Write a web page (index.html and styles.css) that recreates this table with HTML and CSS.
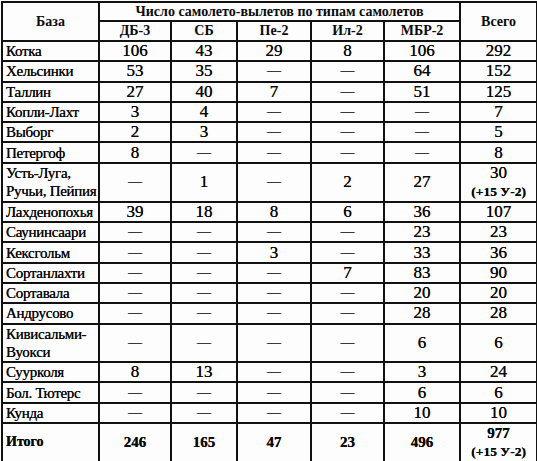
FILE: index.html
```html
<!DOCTYPE html>
<html lang="ru">
<head>
<meta charset="utf-8">
<link rel="stylesheet" href="styles.css">
</head>
<body>
<table class="sorties">
  <colgroup>
    <col class="c-base"><col class="c-db3"><col class="c-sb"><col class="c-pe2"><col class="c-il2"><col class="c-mbr"><col class="c-total">
  </colgroup>
  <thead>
    <tr class="h1">
      <th rowspan="2" class="hb">База</th>
      <th colspan="5" class="hs">Число самолето-вылетов по типам самолетов</th>
      <th rowspan="2" class="hb">Всего</th>
    </tr>
    <tr class="h2">
      <th>ДБ-3</th><th>СБ</th><th>Пе-2</th><th>Ил-2</th><th>МБР-2</th>
    </tr>
  </thead>
  <tbody>
    <tr class="r"><td class="name">Котка</td><td>106</td><td>43</td><td>29</td><td>8</td><td>106</td><td>292</td></tr>
    <tr class="r"><td class="name">Хельсинки</td><td>53</td><td>35</td><td class="d">—</td><td class="d">—</td><td>64</td><td>152</td></tr>
    <tr class="r"><td class="name">Таллин</td><td>27</td><td>40</td><td>7</td><td class="d">—</td><td>51</td><td>125</td></tr>
    <tr class="r"><td class="name">Копли-Лахт</td><td>3</td><td>4</td><td class="d">—</td><td class="d">—</td><td class="d">—</td><td>7</td></tr>
    <tr class="r"><td class="name">Выборг</td><td>2</td><td>3</td><td class="d">—</td><td class="d">—</td><td class="d">—</td><td>5</td></tr>
    <tr class="r"><td class="name">Петергоф</td><td>8</td><td class="d">—</td><td class="d">—</td><td class="d">—</td><td class="d">—</td><td>8</td></tr>
    <tr class="r2"><td class="name">Усть-Луга,<br>Ручьи, Пейпия</td><td class="d">—</td><td>1</td><td class="d">—</td><td>2</td><td>27</td><td>30<br><span class="note">(+15 У-2)</span></td></tr>
    <tr class="r"><td class="name">Лахденопохья</td><td>39</td><td>18</td><td>8</td><td>6</td><td>36</td><td>107</td></tr>
    <tr class="r"><td class="name">Саунинсаари</td><td class="d">—</td><td class="d">—</td><td class="d">—</td><td class="d">—</td><td>23</td><td>23</td></tr>
    <tr class="r"><td class="name">Кексгольм</td><td class="d">—</td><td class="d">—</td><td>3</td><td class="d">—</td><td>33</td><td>36</td></tr>
    <tr class="r"><td class="name">Сортанлахти</td><td class="d">—</td><td class="d">—</td><td class="d">—</td><td>7</td><td>83</td><td>90</td></tr>
    <tr class="r"><td class="name">Сортавала</td><td class="d">—</td><td class="d">—</td><td class="d">—</td><td class="d">—</td><td>20</td><td>20</td></tr>
    <tr class="r"><td class="name">Андрусово</td><td class="d">—</td><td class="d">—</td><td class="d">—</td><td class="d">—</td><td>28</td><td>28</td></tr>
    <tr class="r2"><td class="name">Кивисальми-<br>Вуокси</td><td class="d">—</td><td class="d">—</td><td class="d">—</td><td class="d">—</td><td>6</td><td>6</td></tr>
    <tr class="r"><td class="name">Суурколя</td><td>8</td><td>13</td><td class="d">—</td><td class="d">—</td><td>3</td><td>24</td></tr>
    <tr class="r"><td class="name">Бол. Тютерс</td><td class="d">—</td><td class="d">—</td><td class="d">—</td><td class="d">—</td><td>6</td><td>6</td></tr>
    <tr class="r"><td class="name">Кунда</td><td class="d">—</td><td class="d">—</td><td class="d">—</td><td class="d">—</td><td>10</td><td>10</td></tr>
    <tr class="r2 sum"><td class="name">Итого</td><td>246</td><td>165</td><td>47</td><td>23</td><td>496</td><td>977<br><span class="note">(+15 У-2)</span></td></tr>
  </tbody>
</table>
</body>
</html>
```

FILE: styles.css
```css
html, body {
  margin: 0;
  padding: 0;
  background: #fdfdfd;
}
body {
  padding: 1px 0 0 1px;
  font-family: "Liberation Serif", "Times New Roman", serif;
  color: #0a0a0a;
}
.sorties {
  border-collapse: collapse;
  table-layout: fixed;
  width: 535px;
  border: 2px solid #111;
}
.sorties th,
.sorties td {
  border: 2px solid #111;
  padding: 0;
  text-align: center;
  vertical-align: middle;
  overflow: hidden;
  white-space: nowrap;
}
.c-base { width: 97px; }
.c-db3 { width: 72px; }
.c-sb { width: 66px; }
.c-pe2 { width: 74px; }
.c-il2 { width: 73px; }
.c-mbr { width: 76px; }
.c-total { width: 77px; }

.sorties th {
  font-weight: bold;
  font-size: 14px;
  line-height: 16px;
}
.h1 { height: 19px; }
.h2 { height: 20px; }
.sorties td {
  font-size: 17px;
  line-height: 18px;
  text-shadow: 0 0 0.4px #000;
}
.sorties td.d {
  font-size: 14px;
}
.r { height: 20.3px; }
.r2 { height: 38.5px; }
.sorties td.name {
  text-align: left;
  padding-left: 3px;
  font-size: 15px;
  letter-spacing: -0.3px;
}
.note {
  font-size: 13.5px;
  font-weight: bold;
}
.sum td {
  font-weight: bold;
  font-size: 15px;
}
.sum td.name {
  font-size: 14px;
  letter-spacing: 0;
}
```
